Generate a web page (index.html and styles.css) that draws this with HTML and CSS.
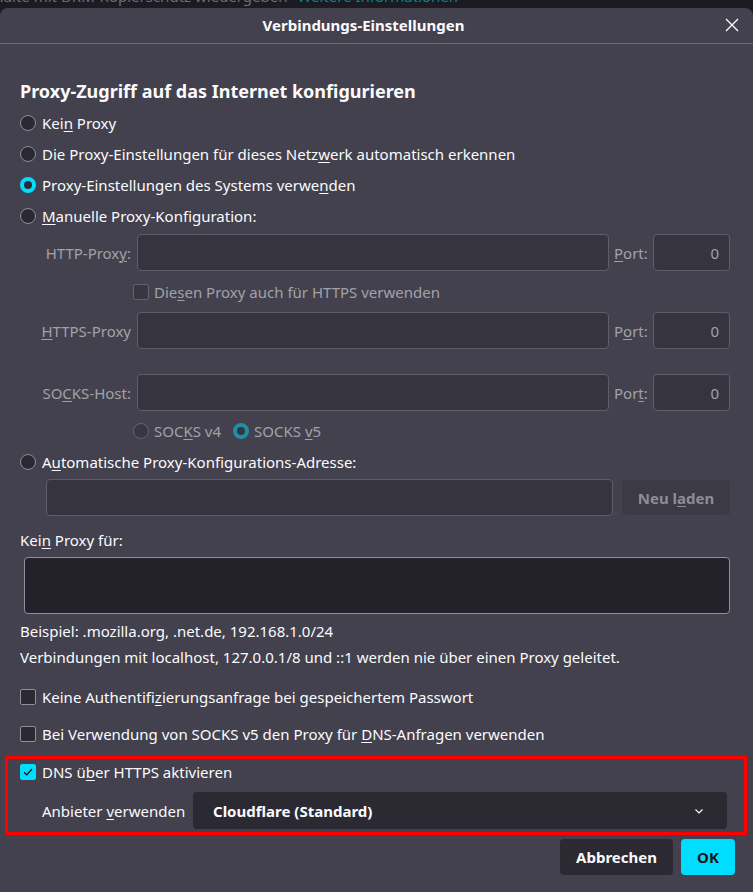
FILE: index.html
```html
<!DOCTYPE html>
<html lang="de">
<head>
<meta charset="utf-8">
<title>Verbindungs-Einstellungen</title>
<link rel="stylesheet" href="styles.css">
</head>
<body>
<div class="backdrop">
  <div class="backdrop-text">Inhalte mit DRM-Kopierschutz wiedergeben <span class="backdrop-link">Weitere Informationen</span></div>
</div>
<div class="dialog">
  <div class="header">
    <div class="title">Verbindungs-Einstellungen</div>
    <button class="close" aria-label="Schließen">
      <svg width="14" height="14" viewBox="0 0 14 14"><path d="M1 1 L13 13 M13 1 L1 13" stroke="#fbfbfe" stroke-width="1.4" fill="none"/></svg>
    </button>
  </div>
  <div class="content">
    <h1 class="heading">Proxy-Zugriff auf das Internet konfigurieren</h1>
    <div class="row radio-row"><span class="radio"></span><span>Kei<u>n</u> Proxy</span></div>
    <div class="row radio-row"><span class="radio"></span><span>Die Proxy-Einstellungen für dieses Netz<u>w</u>erk automatisch erkennen</span></div>
    <div class="row radio-row"><span class="radio checked"></span><span>Proxy-Einstellungen des Systems verwe<u>n</u>den</span></div>
    <div class="row radio-row"><span class="radio"></span><span><u>M</u>anuelle Proxy-Konfiguration:</span></div>

    <div class="proxy-grid">
      <label class="flabel">HTTP-Prox<u>y</u>:</label>
      <div class="input disabled"></div>
      <label class="plabel"><u>P</u>ort:</label>
      <div class="input disabled port">0</div>

      <div class="check-cell">
        <span class="checkbox disabled"></span><span class="dim">Die<u>s</u>en Proxy auch für HTTPS verwenden</span>
      </div>

      <label class="flabel"><u>H</u>TTPS-Proxy</label>
      <div class="input disabled"></div>
      <label class="plabel">P<u>o</u>rt:</label>
      <div class="input disabled port">0</div>

      <div class="spacer"></div>

      <label class="flabel">SO<u>C</u>KS-Host:</label>
      <div class="input disabled"></div>
      <label class="plabel">Por<u>t</u>:</label>
      <div class="input disabled port">0</div>

      <div class="socks-cell">
        <span class="radio disabled"></span><span class="dim">SOC<u>K</u>S v4</span>
        <span class="radio checked disabled v5"></span><span class="dim">SOCKS <u>v</u>5</span>
      </div>
    </div>

    <div class="row radio-row auto-row"><span class="radio"></span><span>A<u>u</u>tomatische Proxy-Konfigurations-Adresse:</span></div>
    <div class="auto-line">
      <div class="input disabled auto-input"></div>
      <button class="btn-disabled">Neu l<u>a</u>den</button>
    </div>

    <div class="noproxy-label">Kei<u>n</u> Proxy für:</div>
    <div class="textarea"></div>
    <div class="hint">Beispiel: .mozilla.org, .net.de, 192.168.1.0/24</div>
    <div class="hint hint2">Verbindungen mit localhost, 127.0.0.1/8 und ::1 werden nie über einen Proxy geleitet.</div>

    <div class="row check-row first-check"><span class="checkbox"></span><span>Keine Authentifi<u>z</u>ierungsanfrage bei gespeichertem Passwort</span></div>
    <div class="row check-row"><span class="checkbox"></span><span>Bei Verwendung von SOCKS v5 den Proxy für <u>D</u>NS-Anfragen verwenden</span></div>

    <div class="highlight">
      <div class="row check-row doh-row">
        <span class="checkbox checked">
          <svg width="16" height="16" viewBox="0 0 16 16"><path d="M3.5 8.2 L6.6 11.3 L12.6 4.6" stroke="#15141a" stroke-width="1.5" fill="none"/></svg>
        </span><span>DNS ü<u>b</u>er HTTPS aktivieren</span>
      </div>
      <div class="provider-row">
        <span class="provider-label">Anbieter <u>v</u>erwenden</span>
        <div class="select">
          <span>Cloudflare (Standard)</span>
          <svg width="12" height="12" viewBox="0 0 12 12"><path d="M2.5 4.5 L6 8 L9.5 4.5" stroke="#fbfbfe" stroke-width="1.2" fill="none"/></svg>
        </div>
      </div>
    </div>

    <div class="buttons">
      <button class="btn btn-secondary">Abbrechen</button>
      <button class="btn btn-primary">OK</button>
    </div>
  </div>
</div>
</body>
</html>
```
FILE: styles.css
```css
* { box-sizing: border-box; }
html, body {
  margin: 0;
  padding: 0;
  background: #1c1b22;
  overflow: hidden;
  height: 892px;
}
body {
  font-family: "Noto Sans", "DejaVu Sans", sans-serif;
  font-size: 15px;
  color: #fbfbfe;
}
u { text-decoration: underline; text-underline-offset: 2px; text-decoration-thickness: 1px; }

.backdrop {
  height: 8px;
  overflow: hidden;
  position: relative;
}
.backdrop-text {
  margin-top: -14px;
  margin-left: -20px;
  font-size: 15px;
  line-height: 20px;
  color: #6d6c75;
  white-space: nowrap;
}
.backdrop-link { color: #0b7f91; margin-left: 6px; }

.dialog {
  background: #42414d;
  border-radius: 8px 8px 0 0;
  height: 884px;
}
.header {
  height: 36px;
  border-bottom: 1px solid #6b6a76;
  display: flex;
  align-items: center;
  justify-content: center;
  position: relative;
}
.title {
  font-weight: 700;
  font-size: 15px;
  margin-top: -2px;
  margin-right: 26px;
}
.close {
  position: absolute;
  right: 12px;
  top: 8px;
  width: 18px;
  height: 18px;
  padding: 0;
  border: 0;
  background: none;
  display: flex;
  align-items: center;
  justify-content: center;
}

.content { padding: 35px 23px 0 20px; }

.heading {
  margin: 0 0 4px 0;
  font-size: 18px;
  line-height: 24px;
  font-weight: 700;
}

.row { display: flex; align-items: center; }
.radio-row { height: 31px; gap: 6px; }

.radio {
  width: 16px;
  height: 16px;
  border-radius: 50%;
  border: 1px solid #8f8f9d;
  background: #2b2a33;
  flex: none;
}
.radio.checked {
  border: 4px solid #00ddff;
  background: #2b2a33;
}
.radio.disabled { opacity: 0.45; }
.radio.checked.disabled { opacity: 0.5; }

.checkbox {
  width: 16px;
  height: 16px;
  border-radius: 2px;
  border: 1px solid #8f8f9d;
  background: #2b2a33;
  flex: none;
  display: flex;
  align-items: center;
  justify-content: center;
}
.checkbox.disabled { opacity: 0.45; }
.checkbox.checked { background: #00ddff; border-color: #00ddff; }

.dim { color: #a2a1aa; }

.proxy-grid {
  display: grid;
  grid-template-columns: 117px 472px 44px 77px;
  margin-top: 3px;
  color: #a2a1aa;
}
.flabel {
  display: flex;
  align-items: center;
  justify-content: flex-end;
  padding-right: 6px;
  height: 37px;
  white-space: nowrap;
}
.plabel {
  display: flex;
  align-items: center;
  padding-left: 5px;
  height: 37px;
}
.input {
  height: 37px;
  border-radius: 4px;
  border: 1px solid #5e5d69;
  background: #35343f;
}
.input.port {
  display: flex;
  align-items: center;
  justify-content: flex-end;
  padding-right: 10px;
}
.check-cell {
  grid-column: 2 / 5;
  display: flex;
  align-items: center;
  gap: 5px;
  height: 41px;
  margin-left: -4px;
}
.spacer { grid-column: 1 / 5; height: 25px; }
.socks-cell {
  grid-column: 2 / 5;
  display: flex;
  align-items: center;
  gap: 5px;
  height: 35px;
  margin-left: -4px;
  padding-top: 4px;
}
.socks-cell .v5 { margin-left: 7px; }

.auto-row { height: 31px; }
.auto-line {
  display: flex;
  gap: 9px;
  margin-left: 26px;
  margin-top: 2px;
}
.auto-input { width: 567px; }
.btn-disabled {
  width: 108px;
  height: 35px;
  margin-top: 1px;
  border: 0;
  border-radius: 4px;
  background: #3b3a45;
  color: #8e8d97;
  font-family: inherit;
  font-size: 15px;
  font-weight: 700;
}

.noproxy-label { margin-top: 12px; height: 24px; line-height: 24px; }
.textarea {
  margin: 5px 0 0 4px;
  width: 706px;
  height: 57px;
  border: 1px solid #8f8f9d;
  border-radius: 4px;
  background: #23222b;
}
.hint { line-height: 24px; margin-top: 5px; }
.hint2 { margin-top: 2px; }

.check-row { height: 37px; gap: 6px; }
.first-check { margin-top: 9px; }

.highlight {
  margin: 4px 0 0 -15px;
  width: 742px;
  height: 79px;
  border: 3px solid #ff0000;
  padding: 0 0 0 12px;
}
.doh-row { height: 26px; margin-top: 0; }
.provider-row {
  display: flex;
  align-items: center;
  margin-top: 7px;
  padding-left: 22px;
}
.provider-label { width: 151px; }
.select {
  width: 534px;
  height: 37px;
  border-radius: 4px;
  background: #2b2a33;
  display: flex;
  align-items: center;
  justify-content: space-between;
  padding: 0 22px 0 20px;
  font-weight: 700;
}

.buttons {
  display: flex;
  justify-content: flex-end;
  gap: 8px;
  margin-top: 4px;
  margin-right: -5px;
}
.btn {
  height: 36px;
  border: 0;
  border-radius: 4px;
  font-family: inherit;
  font-size: 15px;
  font-weight: 700;
}
.btn-secondary { width: 113px; background: #2b2a33; color: #fbfbfe; }
.btn-primary { width: 54px; background: #00ddff; color: #15141a; }
```
